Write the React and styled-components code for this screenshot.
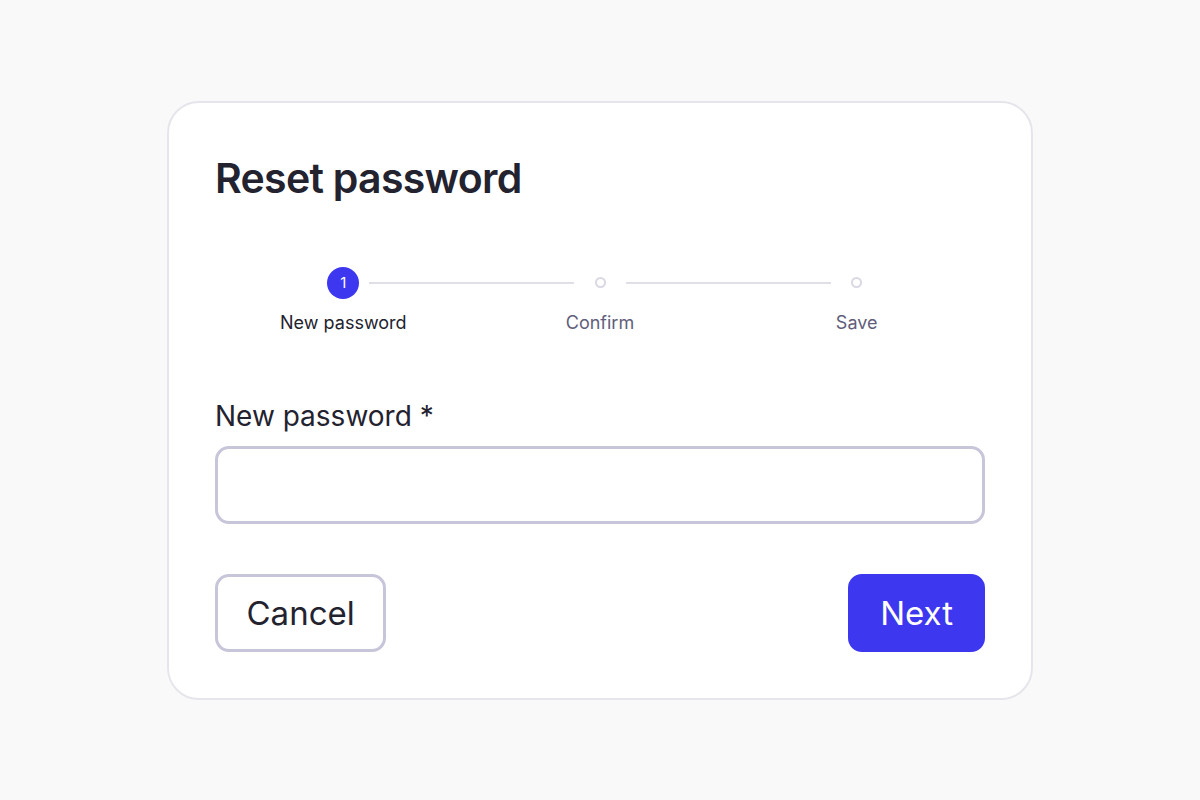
import React from "react";
import styled, { createGlobalStyle } from "styled-components";

const colors = {
  page: "#f9f9f9",
  card: "#ffffff",
  cardBorder: "#e6e5eb",
  ink: "#23222f",
  muted: "#5f5e7b",
  field: "#c7c5d9",
  line: "#e0dfe8",
  primary: "#3d38f0",
};

const steps = ["New password", "Confirm", "Save"];

export default function App() {
  const active = 0;

  return (
    <>
      <GlobalStyle />
      <Page>
        <Card>
          <Title>Reset password</Title>

          <Stepper>
            {steps.map((label, i) => (
              <Step key={label}>
                <Track>
                  <Connector $blank={i === 0} />
                  <Slot>
                    {i === active ? <Bullet>{i + 1}</Bullet> : <Dot />}
                  </Slot>
                  <Connector $blank={i === steps.length - 1} />
                </Track>
                <StepLabel $active={i === active}>{label}</StepLabel>
              </Step>
            ))}
          </Stepper>

          <Field>
            <Label htmlFor="new-password">New password *</Label>
            <Input id="new-password" type="password" />
          </Field>

          <Actions>
            <Button>Cancel</Button>
            <Button $primary>Next</Button>
          </Actions>
        </Card>
      </Page>
    </>
  );
}

const GlobalStyle = createGlobalStyle`
  body {
    margin: 0;
    background: ${colors.page};
    font-family: Inter, "Noto Sans", "Liberation Sans", sans-serif;
    color: ${colors.ink};
  }
  * { box-sizing: border-box; }
`;

const Page = styled.main`
  min-height: 100vh;
  display: flex;
  align-items: center;
  justify-content: center;
`;

const Card = styled.section`
  width: 866px;
  background: ${colors.card};
  border: 2px solid ${colors.cardBorder};
  border-radius: 32px;
  padding: 47px 46px 46px;
  display: flex;
  flex-direction: column;
`;

const Title = styled.h1`
  margin: 0;
  font-size: 41px;
  line-height: 56px;
  font-weight: 600;
  letter-spacing: -0.7px;
  color: ${colors.ink};
`;

const Stepper = styled.ol`
  list-style: none;
  margin: 61px 0 0;
  padding: 0;
  display: grid;
  grid-template-columns: repeat(3, 1fr);
`;

const Step = styled.li`
  display: flex;
  flex-direction: column;
  align-items: center;
`;

const Track = styled.div`
  width: 100%;
  height: 32px;
  display: flex;
  align-items: center;
  gap: 10px;
`;

const Connector = styled.span`
  flex: 1;
  height: 2px;
  background: ${(p) => (p.$blank ? "transparent" : colors.line)};
`;

const Slot = styled.span`
  width: 32px;
  height: 32px;
  display: flex;
  align-items: center;
  justify-content: center;
`;

const Bullet = styled.span`
  width: 32px;
  height: 32px;
  border-radius: 50%;
  background: ${colors.primary};
  color: #fff;
  font-size: 15px;
  display: flex;
  align-items: center;
  justify-content: center;
`;

const Dot = styled.span`
  width: 11px;
  height: 11px;
  border-radius: 50%;
  border: 2px solid #d9d8e3;
`;

const StepLabel = styled.span`
  margin-top: 11px;
  font-size: 18px;
  line-height: 26px;
  color: ${(p) => (p.$active ? colors.ink : colors.muted)};
`;

const Field = styled.div`
  margin-top: 63px;
  display: flex;
  flex-direction: column;
  gap: 13px;
`;

const Label = styled.label`
  font-size: 28px;
  line-height: 34px;
  font-weight: 400;
  color: ${colors.ink};
`;

const Input = styled.input`
  height: 78px;
  border: 3px solid ${colors.field};
  border-radius: 14px;
  background: #fff;
  font: inherit;
  font-size: 26px;
  padding: 0 20px;
  outline: none;
`;

const Actions = styled.div`
  margin-top: 50px;
  display: flex;
  justify-content: space-between;
`;

const Button = styled.button`
  height: 78px;
  padding: 0 ${(p) => (p.$primary ? "29px" : "28.5px")};
  border-radius: 14px;
  border: 3px solid ${(p) => (p.$primary ? colors.primary : colors.field)};
  background: ${(p) => (p.$primary ? colors.primary : "#fff")};
  color: ${(p) => (p.$primary ? "#fff" : colors.ink)};
  font-family: inherit;
  font-size: 33px;
  font-weight: 400;
  cursor: pointer;
`;
